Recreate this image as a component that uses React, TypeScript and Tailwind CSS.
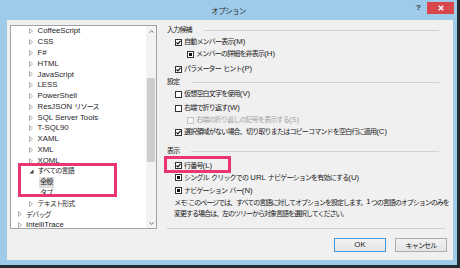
import React from 'react';

const CJK_SPLIT = /([\u3000-\u30ff\u3400-\u9fff\uff00-\uffef]+)/;
const CJK_TEST = /[\u3000-\u30ff\u3400-\u9fff\uff00-\uffef]/;

function T({ s, tight }: { s: string; tight?: boolean }) {
  return (
    <>
      {s.split(CJK_SPLIT).map((p, i) =>
        p === '' ? null : CJK_TEST.test(p) ? (
          <span key={i} className={tight ? 'text-[7px] tracking-[-1px]' : 'text-[7px] tracking-[-0.8px]'}>
            {p}
          </span>
        ) : (
          <span key={i}>{p}</span>
        )
      )}
    </>
  );
}

type Item = { label: string; level: 0 | 1 | 2; kind: 'c' | 'e' | 'l'; sel?: boolean };

const items: Item[] = [
  { label: 'CoffeeScript', level: 1, kind: 'c' },
  { label: 'CSS', level: 1, kind: 'c' },
  { label: 'F#', level: 1, kind: 'c' },
  { label: 'HTML', level: 1, kind: 'c' },
  { label: 'JavaScript', level: 1, kind: 'c' },
  { label: 'LESS', level: 1, kind: 'c' },
  { label: 'PowerShell', level: 1, kind: 'c' },
  { label: 'ResJSON リソース', level: 1, kind: 'c' },
  { label: 'SQL Server Tools', level: 1, kind: 'c' },
  { label: 'T-SQL90', level: 1, kind: 'c' },
  { label: 'XAML', level: 1, kind: 'c' },
  { label: 'XML', level: 1, kind: 'c' },
  { label: 'XOML', level: 1, kind: 'c' },
  { label: 'すべての言語', level: 1, kind: 'e' },
  { label: '全般', level: 2, kind: 'l', sel: true },
  { label: 'タブ', level: 2, kind: 'l' },
  { label: 'テキスト形式', level: 1, kind: 'c' },
  { label: 'デバッグ', level: 0, kind: 'c' },
  { label: 'IntelliTrace', level: 0, kind: 'c' },
];

const levelPad = ['pl-[6px]', 'pl-[17.5px]', 'pl-[29px]'];

function Arrow({ kind }: { kind: 'c' | 'e' | 'l' }) {
  if (kind === 'l') return null;
  return (
    <span className="w-[5px] mr-[4px] flex items-center justify-center shrink-0">
      {kind === 'c' ? (
        <svg width="4" height="6" viewBox="0 0 4 6">
          <path d="M0.5 0.5 L3.5 3 L0.5 5.5 Z" fill="none" stroke="#a6a6a6" strokeWidth="0.9" />
        </svg>
      ) : (
        <svg width="5" height="5" viewBox="0 0 5 5">
          <path d="M4.5 0.5 L4.5 4.5 L0.5 4.5 Z" fill="#333" />
        </svg>
      )}
    </span>
  );
}

function Check({ st }: { st: 'on' | 'off' | 'dot' | 'dis' }) {
  if (st === 'dis')
    return <span className="w-[7px] h-[7px] border border-[#c4c4c4] bg-[#f4f4f4] shrink-0" />;
  return (
    <span className="w-[7px] h-[7px] border border-[#333] bg-white shrink-0 flex items-center justify-center">
      {st === 'on' && (
        <svg width="5" height="5" viewBox="0 0 5 5">
          <path d="M0.5 2.5 L1.9 3.9 L4.6 0.8" fill="none" stroke="#111" strokeWidth="1.2" />
        </svg>
      )}
      {st === 'dot' && <span className="w-[3px] h-[3px] bg-[#111]" />}
    </span>
  );
}

function Opt({ st, label, cls }: { st: 'on' | 'off' | 'dot' | 'dis'; label: string; cls: string }) {
  return (
    <div className={'h-[12px] flex items-center gap-[2px] whitespace-nowrap ' + cls}>
      <Check st={st} />
      <span className={st === 'dis' ? 'text-[#a3a3a3]' : 'text-[#1a1a1a]'}>
        <T s={label} />
      </span>
    </div>
  );
}

function Header({ label, cls }: { label: string; cls: string }) {
  return (
    <div className={'h-[12px] flex items-center mr-[14px] ' + cls}>
      <span className="text-[#1a1a1a]">
        <T s={label} />
      </span>
      <span className="flex-1 h-px bg-[#d2d2d2] ml-[12px]" />
    </div>
  );
}

export default function App() {
  return (
    <div
      className="w-[460px] h-[268px] bg-[#232a31] overflow-hidden relative text-[7.8px] leading-none"
      style={{ fontFamily: '"Liberation Sans", "Noto Sans CJK JP", sans-serif' }}
    >
      <div className="w-[457px] h-[265px] bg-[#9ecbea] flex flex-col">
        {/* title bar */}
        <div className="h-[20px] flex items-start shrink-0">
          <div className="flex-1" />
          <div className="pt-[8px] text-[#2b2b2b]">
            <span className="text-[7.5px] tracking-[-0.6px]">オプション</span>
          </div>
          <div className="flex-1 flex justify-end items-start">
            <span className="mt-[4px] mr-[6px] text-[8px] font-bold text-[#333]">?</span>
            <div className="mt-[2px] mr-[3px] w-[27px] h-[12px] bg-[#d8474a] flex items-center justify-center">
              <svg width="6" height="6" viewBox="0 0 6 6">
                <path d="M0.8 0.8 L5.2 5.2 M5.2 0.8 L0.8 5.2" stroke="#fff" strokeWidth="1.4" />
              </svg>
            </div>
          </div>
        </div>

        {/* content */}
        <div className="flex-1 ml-[7px] mr-[4px] mb-[5px] bg-[#f0f0f0] flex">
          {/* tree */}
          <div className="ml-[3px] mt-[5px] w-[147px] h-[204px] border border-[#a2a2a2] bg-white flex shrink-0">
            <div className="flex-1 overflow-hidden text-[#1e1e1e]">
              {items.map((it, i) => (
                <div key={i} className={'h-[10.78px] flex items-center whitespace-nowrap ' + levelPad[it.level]}>
                  <Arrow kind={it.kind} />
                  {it.sel ? (
                    <span className="bg-[#dcdcdc] px-[1.5px] -ml-[1.5px] py-[1.5px]">
                      <T s={it.label} />
                    </span>
                  ) : (
                    <span>
                      <T s={it.label} />
                    </span>
                  )}
                </div>
              ))}
            </div>
            <div className="w-[10px] bg-[#f3f3f3] flex flex-col items-center shrink-0">
              <div className="h-[10px] flex items-center justify-center">
                <svg width="5" height="3" viewBox="0 0 5 3">
                  <path d="M0.5 2.6 L2.5 0.6 L4.5 2.6" fill="none" stroke="#606060" strokeWidth="0.9" />
                </svg>
              </div>
              <div className="mt-[42px] w-[8px] h-[84px] bg-[#cdcdcd]" />
              <div className="flex-1" />
              <div className="h-[10px] flex items-center justify-center">
                <svg width="5" height="3" viewBox="0 0 5 3">
                  <path d="M0.5 0.4 L2.5 2.4 L4.5 0.4" fill="none" stroke="#606060" strokeWidth="0.9" />
                </svg>
              </div>
            </div>
          </div>

          {/* right pane */}
          <div className="flex-1 ml-[10px] flex flex-col pt-[4px]">
            <Header label="入力候補" cls="" />
            <Opt st="on" label="自動メンバー表示(M)" cls="ml-[8px]" />
            <Opt st="dot" label="メンバーの詳細を非表示(H)" cls="ml-[20px]" />
            <Opt st="on" label="パラメーター ヒント(P)" cls="ml-[8px] mt-[3px]" />
            <Header label="設定" cls="mt-[1px]" />
            <Opt st="off" label="仮想空白文字を使用(V)" cls="ml-[8px]" />
            <Opt st="off" label="右端で折り返す(W)" cls="ml-[8px] mt-[2px]" />
            <Opt st="dis" label="右端の折り返しの記号を表示する(S)" cls="ml-[20px]" />
            <Opt
              st="on"
              label="選択領域がない場合、切り取りまたはコピーコマンドを空白行に適用(C)"
              cls="ml-[8px]"
            />
            <Header label="表示" cls="mt-[7px]" />
            <Opt st="on" label="行番号(L)" cls="ml-[8px] mt-[2.5px]" />
            <Opt st="dot" label="シングル クリックでの URL ナビゲーションを有効にする(U)" cls="ml-[8px]" />
            <Opt st="dot" label="ナビゲーション バー(N)" cls="ml-[8px] mt-[1px]" />
            <div className="ml-[7px] text-[#1a1a1a] whitespace-nowrap">
              <div className="h-[11px] flex items-center">
                <T tight s="メモ: このページでは、すべての言語に対してオプションを設定します。1つの言語のオプションのみを" />
              </div>
              <div className="h-[11px] flex items-center">
                <T tight s="変更する場合は、左のツリーから対象言語を選択してください。" />
              </div>
            </div>
            <div className="mt-[9.5px] mr-[8px] h-px bg-[#d0d0d0]" />
            <div className="mt-[9px] mr-[6px] flex justify-end gap-[9px]">
              <div className="w-[52px] h-[14px] border border-[#3d9be0] bg-linear-to-b from-[#f2f2f2] to-[#e4e4e4] flex items-center justify-center text-[#1a1a1a]">
                OK
              </div>
              <div className="w-[52px] h-[14px] border border-[#acacac] bg-linear-to-b from-[#f2f2f2] to-[#e4e4e4] flex items-center justify-center text-[#1a1a1a]">
                <T s="キャンセル" />
              </div>
            </div>
          </div>
        </div>
      </div>

      {/* annotation highlights */}
      <div className="absolute left-[18px] top-[163px] w-[99px] h-[34px] border-[3px] border-[#ea3570]" />
      <div className="absolute left-[164px] top-[156px] w-[67px] h-[17px] border-[3px] border-[#ea3570]" />
    </div>
  );
}
